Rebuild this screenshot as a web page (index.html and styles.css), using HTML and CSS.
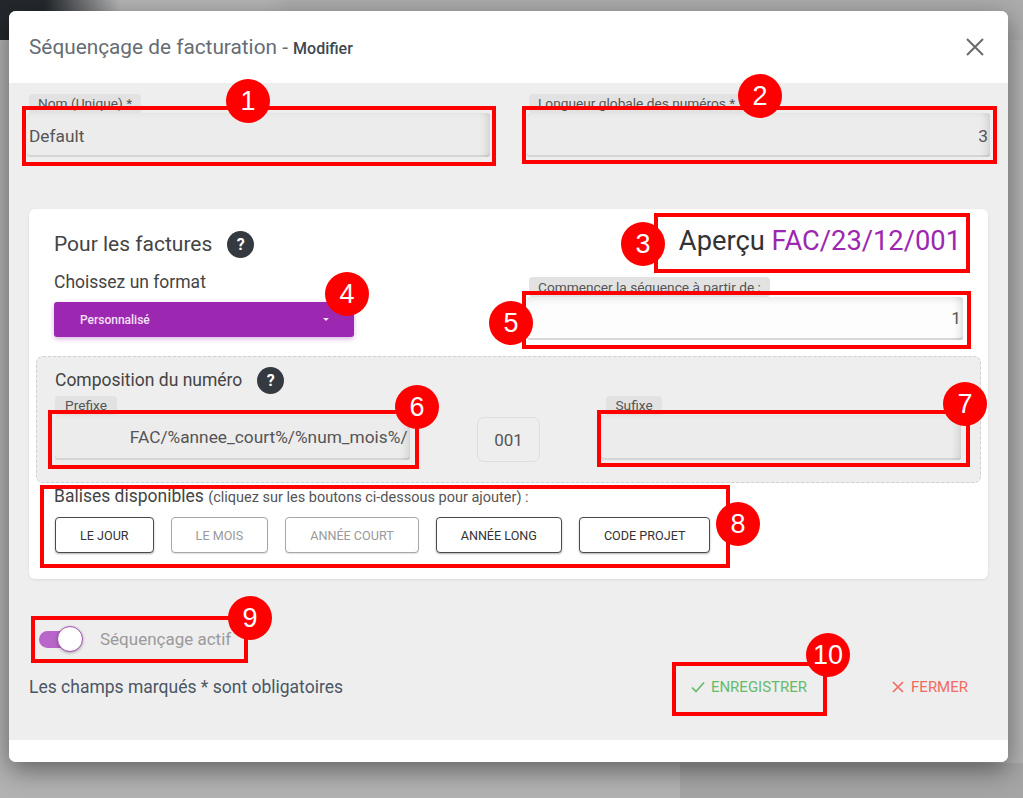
FILE: index.html
```html
<!DOCTYPE html>
<html lang="fr">
<head>
<meta charset="utf-8">
<title>Séquençage de facturation</title>
<link rel="stylesheet" href="styles.css">
</head>
<body>
<div class="modal">
  <div class="modal-header">
    <h1 class="title">Séquençage de facturation - <small>Modifier</small></h1>
    <button class="close" aria-label="Fermer">
      <svg width="18" height="18" viewBox="0 0 18 18"><path d="M1 1 L17 17 M17 1 L1 17" stroke="#6b6b6b" stroke-width="2" fill="none"/></svg>
    </button>
  </div>
  <div class="modal-body">
    <div class="row-top">
      <div class="field">
        <span class="chip">Nom (Unique) *</span>
        <div class="input">Default</div>
      </div>
      <div class="field">
        <span class="chip">Longueur globale des numéros *</span>
        <div class="input right">3</div>
      </div>
    </div>

    <div class="card">
      <div class="card-top">
        <div class="col-left">
          <div class="heading"><span>Pour les factures</span><span class="help">?</span></div>
          <div class="sub">Choissez un format</div>
          <div class="select"><span>Personnalisé</span><span class="caret"></span></div>
        </div>
        <div class="col-right">
          <div class="apercu">Aperçu <span class="code">FAC/23/12/001</span></div>
          <span class="chip">Commencer la séquence à partir de :</span>
          <div class="input white right">1</div>
        </div>
      </div>

      <div class="compo">
        <div class="heading small"><span>Composition du numéro</span><span class="help">?</span></div>
        <div class="compo-row">
          <div class="field prefix">
            <span class="chip flush">Prefixe</span>
            <div class="input right tall">FAC/%annee_court%/%num_mois%/</div>
          </div>
          <div class="num">001</div>
          <div class="field suffix">
            <span class="chip shift">Sufixe</span>
            <div class="input tall"></div>
          </div>
        </div>
      </div>

      <div class="balises">
        <div class="balises-title">Balises disponibles <small>(cliquez sur les boutons ci-dessous pour ajouter) :</small></div>
        <div class="tags">
          <button class="tag">Le jour</button>
          <button class="tag off">Le mois</button>
          <button class="tag off">Année court</button>
          <button class="tag">Année long</button>
          <button class="tag">Code projet</button>
        </div>
      </div>
    </div>

    <div class="toggle-row">
      <span class="switch"><span class="track"></span><span class="knob"></span></span>
      <span class="switch-label">Séquençage actif</span>
    </div>

    <div class="bottom-row">
      <span class="required">Les champs marqués * sont obligatoires</span>
      <div class="actions">
        <button class="btn save">
          <svg width="14" height="12" viewBox="0 0 14 12"><polyline points="1,6.5 5,10.5 13,1.5" fill="none" stroke="#66bb6a" stroke-width="1.7"/></svg>
          <span>Enregistrer</span>
        </button>
        <button class="btn cancel">
          <svg width="12" height="12" viewBox="0 0 12 12"><path d="M1 1 L11 11 M11 1 L1 11" stroke="#f26b62" stroke-width="1.7" fill="none"/></svg>
          <span>Fermer</span>
        </button>
      </div>
    </div>
  </div>
  <div class="modal-footer"></div>
</div>

<div class="annotations">
  <div class="box b1"></div>
  <div class="box b2"></div>
  <div class="box b3"></div>
  <div class="box b5"></div>
  <div class="box b6"></div>
  <div class="box b7"></div>
  <div class="box b8"></div>
  <div class="box b9"></div>
  <div class="box b10"></div>
  <div class="badge n1">1</div>
  <div class="badge n2">2</div>
  <div class="badge n3">3</div>
  <div class="badge n4">4</div>
  <div class="badge n5">5</div>
  <div class="badge n6">6</div>
  <div class="badge n7">7</div>
  <div class="badge n8">8</div>
  <div class="badge n9">9</div>
  <div class="badge n10">10</div>
</div>
</body>
</html>
```

FILE: styles.css
```css
* { box-sizing: border-box; }

html, body {
  margin: 0;
  height: 100%;
}

body {
  position: relative;
  width: 1023px;
  height: 798px;
  overflow: hidden;
  font-family: Roboto, "Liberation Sans", Arial, sans-serif;
  background:
    linear-gradient(90deg, #24282c 0, #24282c 45px, #b4b4b4 120px, #b4b4b4 265px, #acacac 290px) 0 0 / 100% 40px no-repeat,
    linear-gradient(#a5a5a5, #a5a5a5) 680px 763px / 343px 35px no-repeat,
    #b2b2b2;
}

.modal {
  margin: 11px 0 0 9px;
  width: 999px;
  border-radius: 7px;
  overflow: hidden;
  background: #fff;
  box-shadow: 0 8px 26px rgba(0, 0, 0, 0.45);
}

/* header */
.modal-header {
  height: 72px;
  display: flex;
  align-items: center;
  justify-content: space-between;
  padding: 0 24px 0 20px;
  background: #fff;
}

.title {
  margin: 0;
  font-size: 20.8px;
  font-weight: 400;
  color: #656c74;
}

.title small {
  font-size: 16px;
  font-weight: 500;
  color: #3d4752;
}

.close {
  border: 0;
  background: none;
  padding: 0;
  width: 18px;
  height: 18px;
  display: flex;
}

/* body */
.modal-body {
  background: #eeeeee;
  padding: 11px 0 41px;
}

.modal-footer {
  height: 22px;
  background: #fff;
}

.row-top {
  display: grid;
  grid-template-columns: 463px 463px;
  column-gap: 37px;
  padding: 0 18px;
}

.chip {
  display: block;
  width: fit-content;
  height: 19px;
  line-height: 19px;
  margin-left: 2px;
  padding: 0 9px;
  border-radius: 4px;
  background: #e2e2e2;
  color: #555;
  font-size: 13.7px;
  box-shadow: 0 1px 1px rgba(0, 0, 0, 0.04);
}

.chip.flush { margin-left: 0; padding: 0 10px; }
.chip.shift { margin-left: 5px; }

.input {
  height: 44px;
  line-height: 41px;
  padding: 3px 2px 0;
  background: #ececec;
  color: #555;
  font-size: 17.3px;
  border-radius: 3px;
  box-shadow:
    inset -10px 0 10px -8px rgba(0, 0, 0, 0.14),
    inset 0 -2px 0 #d6d6d6,
    inset 0 4px 6px -4px rgba(0, 0, 0, 0.06);
}

.input.right { text-align: right; }
.input.tall { height: 45px; line-height: 41px; padding-top: 2px; }

.input.white {
  height: 43px;
  line-height: 41px;
  padding-top: 1px;
  background: #fdfdfd;
  box-shadow:
    inset -10px 0 10px -8px rgba(0, 0, 0, 0.14),
    inset 0 -2px 0 #d8d8d8,
    inset 0 6px 8px -5px rgba(0, 0, 0, 0.12);
}

/* card */
.card {
  margin: 52px 20px 0;
  padding: 17px 7px 26px;
  background: #fff;
  border-radius: 6px;
  box-shadow: 0 1px 3px rgba(0, 0, 0, 0.08);
}

.card-top {
  display: grid;
  grid-template-columns: 473px 436px;
  height: 114px;
  padding: 0 19px 0 18px;
}

.heading {
  display: flex;
  align-items: center;
  gap: 15px;
  height: 28px;
  margin-top: 4px;
  font-size: 21px;
  color: #444;
}

.heading.small {
  margin-top: 0;
  height: 26px;
  font-size: 17.5px;
}

.help {
  width: 27px;
  height: 27px;
  border-radius: 50%;
  background: #343a40;
  color: #fff;
  font-size: 16px;
  font-weight: 700;
  display: flex;
  align-items: center;
  justify-content: center;
}

.sub {
  margin-top: 14px;
  height: 20px;
  line-height: 20px;
  font-size: 17.5px;
  color: #444;
}

.select {
  margin-top: 10px;
  width: 300px;
  height: 35px;
  padding: 0 25px 0 26px;
  display: flex;
  align-items: center;
  justify-content: space-between;
  background: #9c27b0;
  color: #f1e2f5;
  font-size: 12px;
  font-weight: 500;
  border-radius: 3px;
  box-shadow: 0 2px 5px rgba(156, 39, 176, 0.35);
}

.caret {
  width: 0;
  height: 0;
  border-left: 3px solid transparent;
  border-right: 3px solid transparent;
  border-top: 3px solid #f1e2f5;
}

.col-right .chip { margin-top: 21px; height: 20px; line-height: 20px; }

.apercu {
  height: 30px;
  text-align: right;
  padding-right: 2px;
  line-height: 30px;
  font-size: 27.3px;
  color: #333;
}

.apercu .code { color: #9c27b0; }

/* composition */
.compo {
  height: 127px;
  margin-top: 16px;
  padding: 10px 19px 0 18px;
  border: 1px dashed #cfcfcf;
  border-radius: 7px;
  background: #eeeeee;
}

.compo-row {
  display: flex;
  margin-top: 3px;
}

.prefix { width: 355px; }
.suffix { width: 360px; margin-left: 61px; }

.num {
  width: 64px;
  height: 45px;
  margin: 21px 0 0 67px;
  border: 1px solid #dedede;
  border-radius: 7px;
  background: #eeeeee;
  color: #555;
  font-size: 17px;
  display: flex;
  align-items: center;
  justify-content: center;
}

/* balises */
.balises {
  margin-top: 4px;
  padding-left: 18px;
}

.balises-title {
  height: 18px;
  line-height: 18px;
  font-size: 17.5px;
  color: #444;
  white-space: nowrap;
}

.balises-title small {
  font-size: 14.5px;
  line-height: 18px;
  color: #555;
}

.tags {
  display: flex;
  gap: 17px;
  height: 36px;
  margin: 12px 0 0 1px;
}

.tag {
  height: 36px;
  padding: 0 24px;
  border: 1px solid #4a4a4a;
  border-radius: 4px;
  background: #fff;
  color: #333;
  font-family: Roboto, "Liberation Sans", Arial, sans-serif;
  font-size: 12.6px;
  text-transform: uppercase;
  box-shadow: 0 1px 2px rgba(0, 0, 0, 0.3);
}

.tag.off {
  border-color: #a8a8a8;
  color: #999;
  box-shadow: 0 1px 1px rgba(0, 0, 0, 0.12);
}

/* toggle */
.toggle-row {
  display: flex;
  align-items: center;
  height: 26px;
  margin: 47px 0 0 30px;
}

.switch {
  position: relative;
  width: 44px;
  height: 26px;
  display: block;
}

.track {
  position: absolute;
  left: 0;
  top: 5px;
  width: 41px;
  height: 17px;
  border-radius: 9px;
  background: #b866c9;
}

.knob {
  position: absolute;
  left: 18px;
  top: 0;
  width: 26px;
  height: 26px;
  border-radius: 50%;
  background: #fff;
  border: 1px solid #a94bbb;
  box-shadow: 0 1px 3px rgba(0, 0, 0, 0.3);
}

.switch-label {
  margin-left: 17px;
  font-size: 17px;
  color: #9a9a9a;
}

/* bottom row */
.bottom-row {
  display: flex;
  align-items: center;
  justify-content: space-between;
  height: 24px;
  margin: 23px 20px 0 20px;
}

.required {
  font-size: 17.5px;
  color: #4b5664;
}

.actions {
  display: flex;
  gap: 46px;
}

.btn {
  display: flex;
  align-items: center;
  height: 24px;
  border: 0;
  background: none;
  font-family: Roboto, "Liberation Sans", Arial, sans-serif;
  font-size: 15px;
  text-transform: uppercase;
}

.btn.save { padding: 0 19px 0 20px; gap: 6px; color: #66bb6a; }
.btn.cancel { padding: 0 20px; gap: 7px; color: #f26b62; }

/* annotations overlay */
.annotations {
  position: absolute;
  inset: 0;
  pointer-events: none;
}

.box {
  position: absolute;
  border: 4px solid #ff0000;
}

.b1 { left: 22px; top: 106px; width: 474px; height: 60px; }
.b2 { left: 522px; top: 106px; width: 475px; height: 58px; }
.b3 { left: 654px; top: 213px; width: 316px; height: 60px; }
.b5 { left: 522px; top: 291px; width: 449px; height: 58px; }
.b6 { left: 48px; top: 410px; width: 371px; height: 59px; }
.b7 { left: 597px; top: 410px; width: 373px; height: 57px; }
.b8 { left: 40px; top: 485px; width: 690px; height: 83px; }
.b9 { left: 31px; top: 616px; width: 217px; height: 47px; }
.b10 { left: 672px; top: 662px; width: 155px; height: 54px; }

.badge {
  position: absolute;
  width: 44px;
  height: 44px;
  border-radius: 50%;
  background: #ff0000;
  color: #fff;
  font-family: "Liberation Sans", Arial, sans-serif;
  font-size: 27px;
  display: flex;
  align-items: center;
  justify-content: center;
}

.n1 { left: 226px; top: 79px; }
.n2 { left: 738px; top: 74px; }
.n3 { left: 621px; top: 222px; }
.n4 { left: 325px; top: 272px; }
.n5 { left: 489px; top: 301px; }
.n6 { left: 395px; top: 385px; }
.n7 { left: 943px; top: 382px; }
.n8 { left: 716px; top: 502px; }
.n9 { left: 228px; top: 596px; }
.n10 { left: 806px; top: 633px; }
```
